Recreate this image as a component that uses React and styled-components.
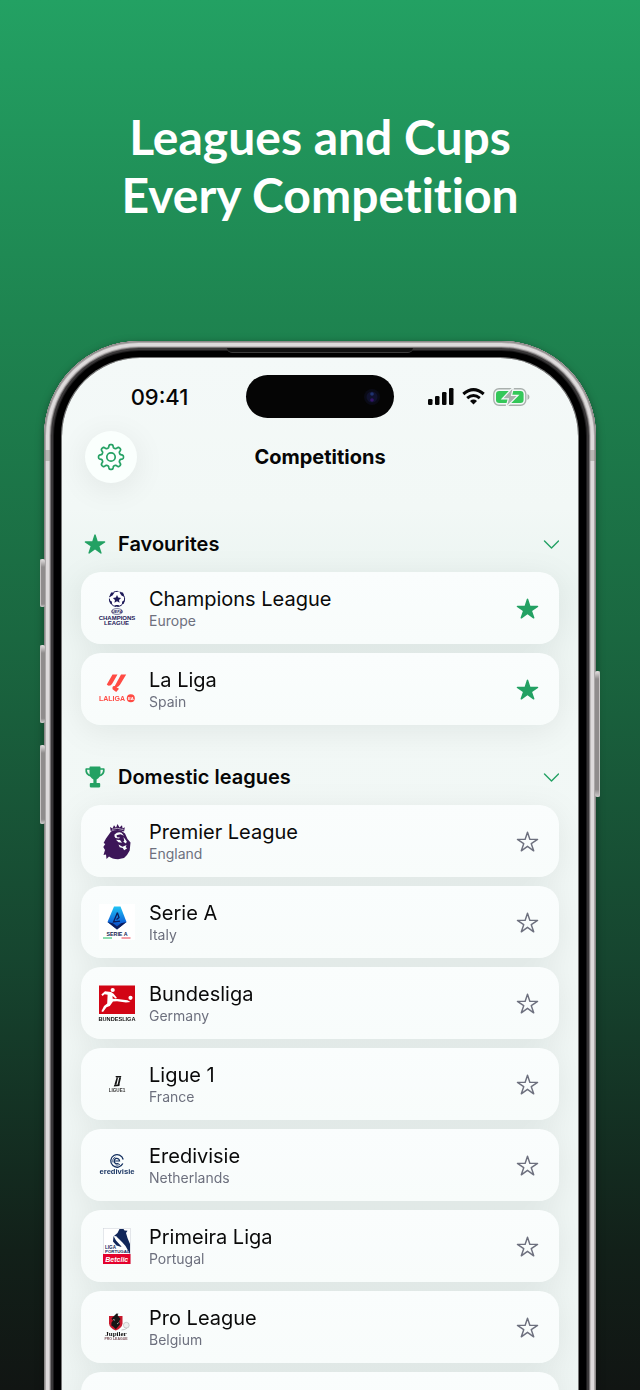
import { useState } from "react";
import styled, { createGlobalStyle } from "styled-components";
import { IoStar, IoStarOutline } from "react-icons/io5";

const GlobalStyle = createGlobalStyle`
  * {
    box-sizing: border-box;
  }

  body {
    margin: 0;
    background: #101613;
  }

  button {
    border: 0;
    padding: 0;
    background: none;
    font: inherit;
    color: inherit;
    cursor: pointer;
  }
`;

const Page = styled.div`
  display: flex;
  flex-direction: column;
  height: 100vh;
  overflow: hidden;
  background: linear-gradient(#23a163 0%, #1e8450 23%, #1a6740 46%, #16452f 69%, #122019 90%, #111513 100%);
  font-family: Inter, Roboto, sans-serif;
`;

const Headline = styled.h1`
  margin: 0;
  padding: 108px 20px 117px;
  color: #fff;
  font-family: Lato, sans-serif;
  font-size: 48px;
  line-height: 58px;
  font-weight: 700;
  font-variant-ligatures: none;
  text-align: center;
`;

const Phone = styled.div`
  position: relative;
  flex: 1 0 auto;
  display: flex;
  margin: 0 44px;
  padding: 17px 18px 0;
  border-radius: 95px 95px 0 0;
  background: #000;
  box-shadow:
    inset 0 0 0 1px #8b8887,
    inset 0 0 0 2px #aba8a8,
    inset 0 0 0 5px #dddadb,
    inset 0 0 0 6px #bebbbb,
    inset 0 0 0 7px #777475,
    inset 0 0 0 9px #393738,
    inset 0 0 0 10px #1c1b1c,
    0 2px 8px rgba(0, 0, 0, 0.35);
`;

const SideKey = styled.span`
  position: absolute;
  ${({ $side }) => $side}: -4px;
  top: ${({ $top }) => $top}px;
  width: 5px;
  height: ${({ $height }) => $height}px;
  border-radius: 2px;
  background: linear-gradient(#e6e3e3, #8f8c8c 8px, #8f8c8c 94%, #d0cdcd);
  box-shadow: inset ${({ $side }) => ($side === "left" ? 1 : -1)}px 0 0 #c6c3c3;
`;

const Antenna = styled.span`
  position: absolute;
  ${({ $side }) => $side}: 0;
  top: 109px;
  width: 6px;
  height: 11px;
  background: rgba(140, 140, 132, 0.45);
`;

const Earpiece = styled.span`
  position: absolute;
  top: 7px;
  left: 50%;
  width: 186px;
  height: 5px;
  margin-left: -93px;
  border-bottom: 1px solid #3d3d3d;
  border-radius: 0 0 8px 8px;
  background: #111;
`;

const Screen = styled.div`
  flex: 1;
  min-width: 0;
  padding: 17px 19px 0;
  border-radius: 78px 78px 0 0;
  background: linear-gradient(#f4f9f8, #f2f8f6 150px, #ebf4f1 230px, #f2f8f6 360px, #eef5f3);
  box-shadow: 0 0 0 1px #777;
`;

const StatusBar = styled.div`
  display: grid;
  grid-template-columns: 1fr 148px 1fr;
  align-items: center;
  color: #060606;
`;

const Time = styled.span`
  padding-right: 8px;
  font-size: 22px;
  line-height: 28px;
  font-weight: 500;
  text-align: center;
`;

const Island = styled.div`
  display: flex;
  align-items: center;
  justify-content: flex-end;
  height: 43px;
  padding-right: 13px;
  border-radius: 22px;
  background: #050505;
`;

const StatusIcons = styled.div`
  display: flex;
  align-items: center;
  justify-content: center;
  gap: 8px;
  padding-left: 5px;
`;

const NavBar = styled.header`
  display: grid;
  grid-template-columns: 60px 1fr 60px;
  align-items: center;
  padding: 13px 0 9px;
`;

const RoundButton = styled.button`
  display: grid;
  place-items: center;
  width: 52px;
  height: 52px;
  margin-left: 4px;
  border-radius: 50%;
  background: #fafffd;
  color: #23a163;
  box-shadow: 0 6px 32px rgba(0, 0, 0, 0.08);
`;

const NavTitle = styled.h2`
  margin: 0;
  color: #060606;
  font-size: 20px;
  line-height: 26px;
  font-weight: 700;
  text-align: center;
`;

const Section = styled.section`
  padding-top: 24px;
`;

const SectionTitle = styled.h3`
  margin: 0;
  font-size: 20px;
  line-height: 26px;
  font-weight: 600;
`;

const SectionToggle = styled.button`
  display: grid;
  grid-template-columns: 22px 1fr 16px;
  align-items: center;
  gap: 12px;
  width: 100%;
  height: 56px;
  padding-left: 3px;
  color: #060606;
  text-align: left;

  svg {
    color: #23a163;
  }
`;

const List = styled.ul`
  display: grid;
  gap: 9px;
  margin: 0;
  padding: 0;
  list-style: none;
  filter: drop-shadow(0 6px 15px rgba(0, 20, 12, 0.07));
`;

const Card = styled.li`
  display: flex;
  align-items: center;
  gap: 14px;
  height: 72px;
  padding: 0 20px 0 18px;
  border-radius: 20px;
  background: linear-gradient(#fafdfd, #f8fcfb);
`;

const CardText = styled.div`
  flex: 1;
  min-width: 0;
`;

const LeagueName = styled.div`
  color: #0a0a0a;
  font-size: 20px;
  line-height: 26px;
`;

const Country = styled.div`
  color: #6d707e;
  font-size: 14px;
  line-height: 18px;
`;

const StarButton = styled.button`
  display: grid;
  place-items: center;
  color: ${({ $active }) => ($active ? "#23a163" : "#6d707e")};
`;

const LogoSvg = styled.svg`
  flex: none;
  width: 36px;
  height: 36px;
  overflow: visible;
  font-family: "Liberation Sans", sans-serif;
  font-weight: 700;
  text-anchor: middle;
`;

const logos = {
  ucl: (
    <g fill="#1d1958">
      <circle cx="18" cy="9" r="7.6" fill="#fff" stroke="#1d1958" strokeWidth="1" strokeDasharray="5 1.4" />
      <path d="M18 5l1.2 2.6 2.9.3-2.1 2 .6 2.8L18 11.3l-2.6 1.4.6-2.8-2.1-2 2.9-.3z" />
      <path d="M12 2.5l3.5 0-2 3-3 1.5zM24 2.5l-3.5 0 2 3 3 1.5zM10.2 10l2.6 1.4.4 3.4-2-1.2zM25.800 10l-2.600 1.400-.4 3.400 2-1.200zM15.500 15l5 0-2.500 2z" />
      <ellipse cx="18" cy="21.500" rx="5.500" ry="2.900" fill="none" stroke="#1d1958" strokeWidth=".6" />
      <text x="18" y="23" fontSize="4" fontStyle="italic">UEFA</text>
      <text x="18" y="30" fontSize="6">CHAMPIONS</text>
      <text x="17.500" y="35.400" fontSize="6">LEAGUE</text>
    </g>
  ),
  laliga: (
    <g fill="#ff4b44">
      <path d="M13.500 3.500H18.500L13.300 12.500Q11.800 15.200 9 14.600L7.800 13.400Z" />
      <path d="M22 3.500H27.200L21 13.800Q19.500 16 17.500 16.300L20 17.800 17.200 21 13.600 18.200Q13 16.800 14 15.300L15.800 15Z" />
      <text x="13" y="30" fontSize="7">LALIGA</text>
      <circle cx="31.800" cy="27.300" r="4" />
      <text x="31.800" y="28.900" fontSize="4.200" fill="#fff">EA</text>
    </g>
  ),
  premier: (
    <g fill="#3c1658">
      <path d="M11 4l2.500 1.400L15 2.200l2 2.600L18.500 1l2 3.600L23 2.300l.6 3.200 2.200-1.200-.7 4.200Q18 5.600 11.700 8z" />
      <path d="M12 8.500Q17 6.200 22 7.500l4 3 2.500 5.500 3 3.500-.8 8L28 32l-3 3-6 1.200Q13 36 10 33.500L7.500 36l-.5-4.500L4.500 32 6 27l-1.700-3 2-3-1.700-1L7 15.500z" />
      <g fill="#f9fdfc">
        <path d="M15.500 11.500q3.500-3.300 7-1.700l2.500 3-3.500-1.500-4 1 .5 2 3 .3-1 .9-3.500-.5q-1.500-1.500-1-3.500z" />
        <path d="M17 16.800l4 .2 2 2.800-3.500-.5zM24.500 14l3.300 4.500-.8 1.900-2.700-1.600.9-1zM19.500 21.500l4 2.200 4-1.700-.8 2.200 1.500 1-3 2-1.500-2.200-3-.8z" />
      </g>
      <path d="M13 6.300Q18.500 4.200 24.600 6.700" fill="none" stroke="#f9fdfc" strokeWidth=".6" />
    </g>
  ),
  seriea: (
    <g>
      <defs>
        <linearGradient id="seriea-blue" x1="0" y1="0" x2="0" y2="1">
          <stop offset="0" stopColor="#20c4f5" />
          <stop offset=".7" stopColor="#0d62d8" />
          <stop offset="1" stopColor="#0c2f9a" />
        </linearGradient>
      </defs>
      <rect width="36" height="36" fill="#fff" />
      <path d="M15 2.500h6.500L27.500 18 18 25.500 8.500 18z" fill="url(#seriea-blue)" />
      <path d="M8.500 18l5.500 1.200 4 3.300 4-3.300 5.500-1.200L18 25.500z" fill="#0d1c5c" />
      <path d="M18.500 8.500L14.500 18l6.500-.8M18.500 9l1.500 4.500-2.500 2" fill="none" stroke="#0d1c5c" strokeWidth="1.300" />
      <text x="18" y="31.600" fontSize="5.300" fill="#14234f">SERIE A</text>
      <path d="M4 34h9" stroke="#4cc984" strokeWidth="1.300" />
      <path d="M22.500 34h9" stroke="#ee6a78" strokeWidth="1.300" />
    </g>
  ),
  bundesliga: (
    <g>
      <rect y=".5" width="36" height="28.500" fill="#d20515" />
      <g fill="#fff">
        <circle cx="13.700" cy="5" r="2.100" />
        <circle cx="31.500" cy="12.800" r="2.100" />
        <path d="M2.300 9.600L6 6.200l6 .7 2.600 1.800 3.400 4.200-1.500.7-3-2.600.2 2.800 5 .3 9.800 1.100 3 1.700-4.500.6-9-1.200-4 .1L10.800 21 7.500 22.300 4 27l-1.600-.8L5 21l3.200-2.600.4-8.600-3-.6-2 1.800z" />
      </g>
      <text x="18" y="35.700" fontSize="5.600" fill="#111">BUNDESLIGA</text>
    </g>
  ),
  ligue1: (
    <g fill="#151515">
      <path d="M16.500 10h5.800l-.3 1.600h-5zM17.500 11.800h1.500l-1.600 7h-2zM20.200 11.800h1.800l-2 8.400h-1.800zM15.200 19l5.500-.5-.3 1.500-5.600.4z" />
      <text x="18" y="25.800" fontSize="4.600" fill="#333">LIGUE1</text>
    </g>
  ),
  eredivisie: (
    <g fill="#14305f">
      <g fill="none" stroke="#14305f">
        <path d="M23.800 16.500A6.300 6.300 0 1 1 24.200 12.500" strokeWidth="1.300" />
        <path d="M15.800 14H20.600A2.700 2.700 0 1 0 19.500 16.200" strokeWidth="1.200" />
        <path d="M14 15.500a4.500 4.500 0 0 1 2.500-5.500M21 17.200q-2 1.600-4.500.7" strokeWidth=".8" />
      </g>
      <text x="18" y="27.300" fontSize="7.600">eredivisie</text>
    </g>
  ),
  portugal: (
    <g>
      <rect x="4.300" y=".3" width="27" height="35.500" fill="#fff" stroke="#ccd0d8" strokeWidth=".5" />
      <path d="M20.500 1h4l1 1.500 3 .3-1.500 2.200 1.500 5L31 16v10l-4.500-8-3.500-4-3-3-3-2.500-2-.5 3.500-3z" fill="#12275a" />
      <path d="M14.500 8l2.500 4.500 5 5.500.5 1-5-1.500-3.500-4z" fill="#12275a" />
      <path d="M16.500 8l10 12" stroke="#fff" strokeWidth="1" />
      <g fill="#12275a" textAnchor="start">
        <text x="6" y="20.500" fontSize="4.600">LIGA</text>
        <text x="6" y="25" fontSize="4.400">PORTUGAL</text>
      </g>
      <rect x="4" y="26" width="27.500" height="10" fill="#e4022d" />
      <text x="17.800" y="33.500" fontSize="7" fontStyle="italic" fill="#fff">Betclic</text>
    </g>
  ),
  jupiler: (
    <g>
      <path d="M10 7h13.500v7.500Q23 19 16.800 21.500 10.500 19 10 14.500z" fill="#c8182c" />
      <path d="M14 8l2-2 1.500-1.500 2 .3L18.500 6l1.500 2 1.500 2-1.500 2.300 1 3-2 2.500-2.200 2.500-2.500-2.500-2-1.200.2-3 1.500-2-1.500-2z" fill="#161616" />
      <path d="M14 10.500l2 .7M18 15l1.800-1.500" stroke="#ddd" strokeWidth=".7" />
      <circle cx="27.300" cy="16.200" r="2.900" fill="#eceeee" stroke="#a5a8a8" strokeWidth=".5" />
      <path d="M22.500 21q4-.2 5.500-2" fill="none" stroke="#bbb" strokeWidth=".8" />
      <text x="17" y="26.500" fontSize="7" fill="#111" fontFamily="Liberation Serif">Jupiler</text>
      <text x="17" y="31.200" fontSize="3.500" fill="#7b5058">PRO LEAGUE</text>
    </g>
  ),
  superlig: <circle cx="18" cy="18" r="14" fill="#e2061a" />,
};

// eight rounded teeth around a ring
const gearPoints = Array.from({ length: 160 }, (_, i) => {
  const angle = (i / 160) * Math.PI * 2;
  const radius = 10.9 + 1.6 * Math.tanh(2 * Math.cos(angle * 8));
  return `${(14 + radius * Math.cos(angle)).toFixed(2)},${(14 + radius * Math.sin(angle)).toFixed(2)}`;
}).join(" ");

function GearIcon() {
  return (
    <svg width="28" height="28" viewBox="0 0 28 28" fill="none" stroke="currentColor" strokeWidth="1.7" strokeLinejoin="round" aria-hidden="true">
      <polygon points={gearPoints} />
      <circle cx="14" cy="14" r="4.200" />
    </svg>
  );
}

function TrophyIcon({ size }) {
  return (
    <svg width={size} height={size} viewBox="0 0 22 22" fill="currentColor" aria-hidden="true">
      <path d="M5.500 1.200Q5.500.6 6.200.6h9.600q.7 0 .7.6V6.500Q16.500 11.800 12.600 13.400V17h2.700q.9 0 .9.900V20.600q0 .8-.9.800H6.700q-.9 0-.9-.8V17.900q0-.9.9-.9h2.700V13.400Q5.500 11.800 5.500 6.500z" />
      <path d="M6 3H2.200Q1.600 8.700 7.200 9.800M16 3h3.800Q20.400 8.700 14.800 9.800" fill="none" stroke="currentColor" strokeWidth="1.700" strokeLinejoin="round" />
    </svg>
  );
}

function ChevronIcon() {
  return (
    <svg width="16" height="16" viewBox="0 0 16 16" fill="none" stroke="currentColor" strokeWidth="1.400" strokeLinecap="round" strokeLinejoin="round" aria-hidden="true">
      <path d="M1.500 5L8.500 12l7-7" />
    </svg>
  );
}

const sections = [
  {
    title: "Favourites",
    Icon: IoStar,
    leagues: [
      { name: "Champions League", country: "Europe", logo: "ucl", favourite: true },
      { name: "La Liga", country: "Spain", logo: "laliga", favourite: true },
    ],
  },
  {
    title: "Domestic leagues",
    Icon: TrophyIcon,
    leagues: [
      { name: "Premier League", country: "England", logo: "premier" },
      { name: "Serie A", country: "Italy", logo: "seriea" },
      { name: "Bundesliga", country: "Germany", logo: "bundesliga" },
      { name: "Ligue 1", country: "France", logo: "ligue1" },
      { name: "Eredivisie", country: "Netherlands", logo: "eredivisie" },
      { name: "Primeira Liga", country: "Portugal", logo: "portugal" },
      { name: "Pro League", country: "Belgium", logo: "jupiler" },
      { name: "Süper Lig", country: "Turkey", logo: "superlig" },
    ],
  },
];

function SignalIcon() {
  return (
    <svg width="26" height="17" viewBox="0 0 26 17" fill="currentColor" aria-hidden="true">
      <rect y="11" width="4.500" height="6" rx="1.300" />
      <rect x="7" y="8" width="4.500" height="9" rx="1.300" />
      <rect x="14" y="4" width="4.500" height="13" rx="1.300" />
      <rect x="21" y="0" width="4.500" height="17" rx="1.300" />
    </svg>
  );
}

function WifiIcon() {
  return (
    <svg width="23" height="17" viewBox="0 0 23 17" fill="none" stroke="currentColor" strokeWidth="3" aria-hidden="true">
      <path d="M1.300 6Q11.500-2.800 21.700 6" />
      <path d="M5.200 10.200Q11.500 4.800 17.800 10.200" />
      <path d="M11.500 16.500L8 12.900Q11.500 10.100 15 12.900z" fill="currentColor" stroke="none" />
    </svg>
  );
}

function BatteryIcon() {
  return (
    <svg width="37" height="18" viewBox="0 0 37 18" aria-hidden="true">
      <rect x=".8" y=".8" width="32" height="16.400" rx="5.200" fill="none" stroke="#a9b0ad" strokeWidth="1.400" />
      <rect x="3" y="3" width="27.600" height="12" rx="3.200" fill="#34c759" />
      <path d="M34.500 6v6q2-.9 2-3t-2-3z" fill="#a9b0ad" />
      <path d="M19.500.8L10.500 10.200h5.600l-2 7.300 9.500-9.500h-5.800z" fill="#a9b0ad" stroke="#f4f9f8" strokeWidth="2.400" paintOrder="stroke" />
    </svg>
  );
}

function Camera() {
  return (
    <svg width="18" height="18" viewBox="0 0 18 18" aria-hidden="true">
      <circle cx="9" cy="9" r="8" fill="#0a0b16" />
      <circle cx="9" cy="9" r="5.500" fill="#10122e" />
      <circle cx="9" cy="6" r="1.800" fill="#1f3370" />
      <circle cx="9" cy="12" r="1.800" fill="#35156b" />
    </svg>
  );
}

function LeagueCard({ league }) {
  const [favourite, setFavourite] = useState(Boolean(league.favourite));
  const Star = favourite ? IoStar : IoStarOutline;

  return (
    <Card>
      <LogoSvg viewBox="0 0 36 36" aria-hidden="true">
        {logos[league.logo]}
      </LogoSvg>
      <CardText>
        <LeagueName>{league.name}</LeagueName>
        <Country>{league.country}</Country>
      </CardText>
      <StarButton
        type="button"
        $active={favourite}
        aria-pressed={favourite}
        aria-label={`Favourite ${league.name}`}
        onClick={() => setFavourite(!favourite)}
      >
        <Star size={23} />
      </StarButton>
    </Card>
  );
}

function LeagueSection({ title, Icon, leagues }) {
  const [open, setOpen] = useState(true);

  return (
    <Section>
      <SectionTitle>
        <SectionToggle type="button" aria-expanded={open} onClick={() => setOpen(!open)}>
          <Icon size={22} />
          {title}
          <ChevronIcon />
        </SectionToggle>
      </SectionTitle>
      {open && (
        <List>
          {leagues.map((league) => (
            <LeagueCard key={league.name} league={league} />
          ))}
        </List>
      )}
    </Section>
  );
}

export default function App() {
  return (
    <Page>
      <GlobalStyle />
      <Headline>
        Leagues and Cups
        <br />
        Every Competition
      </Headline>
      <Phone>
        <SideKey $side="left" $top={218} $height={48} />
        <SideKey $side="left" $top={304} $height={78} />
        <SideKey $side="left" $top={404} $height={79} />
        <SideKey $side="right" $top={330} $height={126} />
        <Antenna $side="left" />
        <Antenna $side="right" />
        <Earpiece />
        <Screen>
          <StatusBar>
            <Time>09:41</Time>
            <Island>
              <Camera />
            </Island>
            <StatusIcons>
              <SignalIcon />
              <WifiIcon />
              <BatteryIcon />
            </StatusIcons>
          </StatusBar>
          <NavBar>
            <RoundButton type="button" aria-label="Settings">
              <GearIcon />
            </RoundButton>
            <NavTitle>Competitions</NavTitle>
          </NavBar>
          <main>
            {sections.map((section) => (
              <LeagueSection key={section.title} {...section} />
            ))}
          </main>
        </Screen>
      </Phone>
    </Page>
  );
}
